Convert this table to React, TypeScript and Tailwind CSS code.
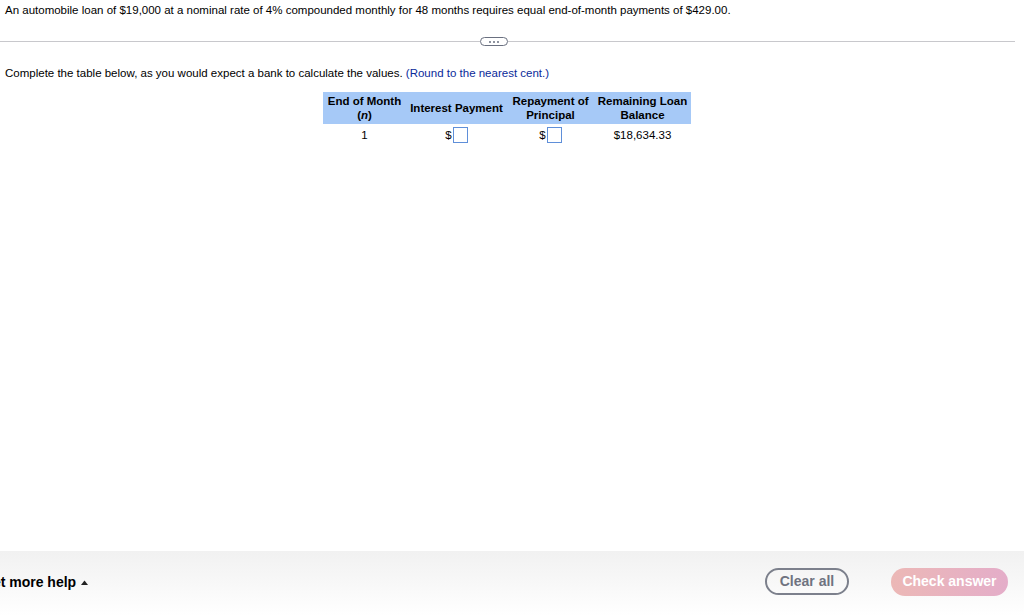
export default function App() {
  return (
    <div className="relative w-[1024px] h-[616px] overflow-hidden bg-white font-['Liberation_Sans',Arial,sans-serif] text-black">
      <div className="flex h-[551px] flex-col">
        <p className="pl-[5px] pt-[3px] text-[11.5px] leading-[14px]">
          An automobile loan of $19,000 at a nominal rate of 4% compounded monthly for 48 months requires equal end-of-month payments of $429.00.
        </p>

        {/* separator with expand button */}
        <div className="mt-[20px] flex w-[1015px] items-center">
          <div className="h-px w-[480px] bg-[#c8c8cc]" />
          <button className="flex h-[9px] w-[28px] items-center justify-center gap-[2px] rounded-full border border-[#6a7080] bg-white">
            <span className="h-[2px] w-[2px] rounded-full bg-[#6a7080]" />
            <span className="h-[2px] w-[2px] rounded-full bg-[#6a7080]" />
            <span className="h-[2px] w-[2px] rounded-full bg-[#6a7080]" />
          </button>
          <div className="h-px flex-1 bg-[#c8c8cc]" />
        </div>

        <p className="mt-[20px] pl-[5px] text-[11.5px] leading-[14px]">
          Complete the table below, as you would expect a bank to calculate the values.{' '}
          <span className="text-[#0a2a9a]">(Round to the nearest cent.)</span>
        </p>

        <div className="mt-[12px] flex justify-start pl-[323px]">
          <table className="border-collapse text-[11.5px] leading-[14px]">
            <thead>
              <tr className="bg-[#a6c9f7] font-bold">
                <th className="h-[32px] w-[83px] px-[3px] text-center align-middle">
                  End of Month
                  <br />
                  (<i>n</i>)
                </th>
                <th className="w-[101px] px-[3px] text-center align-middle">Interest Payment</th>
                <th className="w-[87px] px-[3px] text-center align-middle">
                  Repayment of
                  <br />
                  Principal
                </th>
                <th className="w-[97px] px-[3px] text-center align-middle">
                  Remaining Loan
                  <br />
                  Balance
                </th>
              </tr>
            </thead>
            <tbody>
              <tr>
                <td className="h-[22px] text-center">1</td>
                <td className="text-center">
                  <span className="inline-flex items-center">
                    $<span className="ml-px inline-block h-[16px] w-[15px] border border-[#5f8fd9] bg-white" />
                  </span>
                </td>
                <td className="text-center">
                  <span className="inline-flex items-center">
                    $<span className="ml-px inline-block h-[16px] w-[15px] border border-[#5f8fd9] bg-white" />
                  </span>
                </td>
                <td className="text-center">$18,634.33</td>
              </tr>
            </tbody>
          </table>
        </div>
      </div>

      {/* footer bar */}
      <div className="flex h-[65px] items-center justify-between bg-gradient-to-b from-[#f1f1f1] to-white pr-[16px]">
        <div className="ml-[-18px] flex items-center gap-[5px] pb-[3px] text-[14px] font-bold">
          Get more help
          <svg width="7" height="5" viewBox="0 0 7 5">
            <path d="M0 5 L3.5 0.5 L7 5 Z" fill="#222" />
          </svg>
        </div>
        <div className="flex items-center gap-[42px] pb-[4px]">
          <button className="h-[27px] w-[84px] rounded-full border-2 border-[#7c808c] text-[14px] font-bold text-[#6f7380]">
            Clear all
          </button>
          <button className="h-[28px] w-[117px] rounded-full bg-gradient-to-r from-[#ecb8b6] to-[#e4adc9] text-[14px] font-bold text-white">
            Check answer
          </button>
        </div>
      </div>
    </div>
  );
}
